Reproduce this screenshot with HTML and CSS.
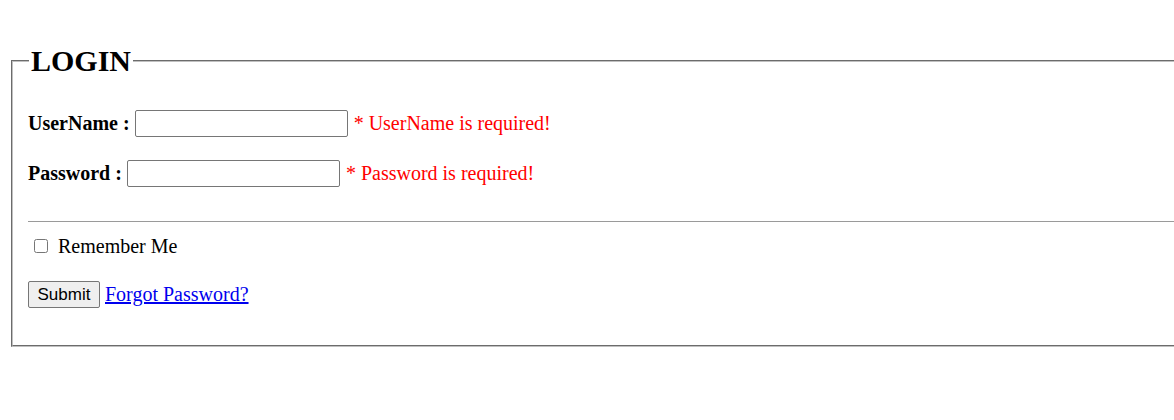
FILE: index.html
```html
<!DOCTYPE html>
<html lang="en">
<head>
<meta charset="utf-8">
<title>Login</title>
<link rel="stylesheet" href="styles.css">
</head>
<body>
<form class="login-form">
  <fieldset class="login-box">
    <legend class="login-title">LOGIN</legend>
    <div class="form-body">
      <div class="field-row">
        <label class="field-label" for="user">UserName :</label>
        <input class="text-input" id="user" type="text">
        <span class="error">* UserName is required!</span>
      </div>
      <div class="field-row">
        <label class="field-label" for="pass">Password :</label>
        <input class="text-input" id="pass" type="password">
        <span class="error">* Password is required!</span>
      </div>
      <hr class="divider">
      <div class="check-row">
        <input class="check" id="remember" type="checkbox">
        <label class="check-label" for="remember">Remember Me</label>
      </div>
      <div class="action-row">
        <button class="submit-btn" type="submit">Submit</button>
        <a class="forgot-link" href="#">Forgot Password?</a>
      </div>
    </div>
  </fieldset>
</form>
</body>
</html>
```
FILE: styles.css
```css
body {
  margin: 8px 0 8px 8px;
  background: #fff;
  color: #000;
  font-family: "Liberation Serif", "Times New Roman", serif;
  font-size: 20px;
}
.login-form {
  margin: 0;
}
.login-box {
  margin: 34px 0 0 3px;
  padding: 0 0 37px 15px;
  border: 2px groove #c0c0c0;
  border-right: 0;
  min-width: 0;
}
.login-title {
  margin-left: 1px;
  padding: 0 2px;
  font-size: 30px;
  font-weight: bold;
  line-height: 37px;
}
.form-body {
  padding-top: 31px;
}
.field-row {
  display: flex;
  align-items: center;
  height: 26px;
  margin-bottom: 24px;
}
.field-row:nth-child(2) {
  margin-bottom: 0;
}
.field-label {
  font-weight: bold;
  margin-right: 5px;
}
.text-input {
  box-sizing: border-box;
  width: 213px;
  height: 27px;
  margin: 0;
  border: 1px solid #767676;
  border-radius: 2px;
  padding: 2px 4px;
  font-size: 16px;
}
.error {
  color: #f00;
  margin-left: 6px;
}
.divider {
  margin: 35px 0 0 0;
  border: 0;
  border-top: 1px solid #9a9a9a;
  height: 0;
}
.check-row {
  display: flex;
  align-items: center;
  margin-top: 12px;
  height: 24px;
}
.check {
  width: 14px;
  height: 14px;
  margin: 0 10px 0 6px;
}
.check-label {
  line-height: 24px;
}
.action-row {
  display: flex;
  align-items: center;
  margin-top: 23px;
}
.submit-btn {
  box-sizing: border-box;
  width: 72px;
  height: 27px;
  margin: 0 5px 0 0;
  padding: 0;
  font-family: "Liberation Sans", Arial, sans-serif;
  font-size: 17px;
  color: #000;
  background: #efefef;
  border: 1px solid #767676;
  border-radius: 2px;
}
.forgot-link {
  color: #00e;
  text-decoration: underline;
}
```
